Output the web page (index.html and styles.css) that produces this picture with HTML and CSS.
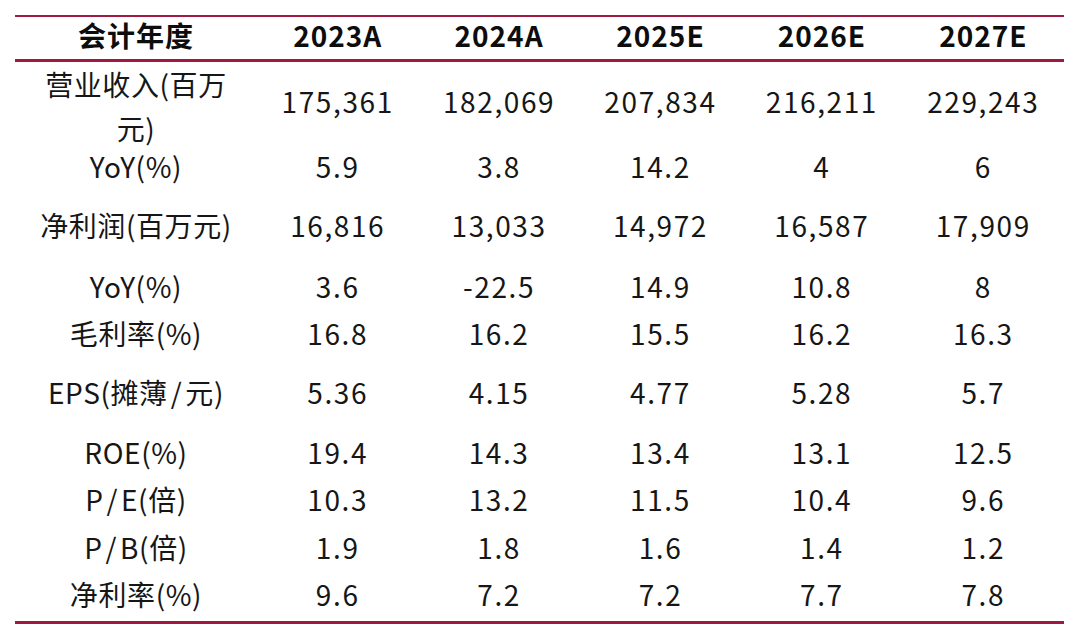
FILE: index.html
```html
<!DOCTYPE html>
<html lang="zh">
<head>
<meta charset="utf-8">
<title>盈利预测</title>
<link rel="stylesheet" href="styles.css">
</head>
<body>
<table class="fin">
  <colgroup>
    <col class="c-label">
    <col class="c-num"><col class="c-num"><col class="c-num"><col class="c-num"><col class="c-num">
  </colgroup>
  <thead>
    <tr>
      <th>会计年度</th><th>2023A</th><th>2024A</th><th>2025E</th><th>2026E</th><th>2027E</th>
    </tr>
  </thead>
  <tbody>
    <tr class="r1"><td class="lbl wrap">营业收入(百万元)</td><td>175,361</td><td>182,069</td><td>207,834</td><td>216,211</td><td>229,243</td></tr>
    <tr class="r2"><td class="lbl">YoY(%)</td><td>5.9</td><td>3.8</td><td>14.2</td><td>4</td><td>6</td></tr>
    <tr class="r3"><td class="lbl">净利润(百万元)</td><td>16,816</td><td>13,033</td><td>14,972</td><td>16,587</td><td>17,909</td></tr>
    <tr class="r4"><td class="lbl">YoY(%)</td><td>3.6</td><td>-22.5</td><td>14.9</td><td>10.8</td><td>8</td></tr>
    <tr class="r5"><td class="lbl">毛利率(%)</td><td>16.8</td><td>16.2</td><td>15.5</td><td>16.2</td><td>16.3</td></tr>
    <tr class="r6"><td class="lbl">EPS(摊薄<span class="sl">/</span>元)</td><td>5.36</td><td>4.15</td><td>4.77</td><td>5.28</td><td>5.7</td></tr>
    <tr class="r7"><td class="lbl">ROE(%)</td><td>19.4</td><td>14.3</td><td>13.4</td><td>13.1</td><td>12.5</td></tr>
    <tr class="r8"><td class="lbl">P<span class="sl">/</span>E(倍)</td><td>10.3</td><td>13.2</td><td>11.5</td><td>10.4</td><td>9.6</td></tr>
    <tr class="r9"><td class="lbl">P<span class="sl">/</span>B(倍)</td><td>1.9</td><td>1.8</td><td>1.6</td><td>1.4</td><td>1.2</td></tr>
    <tr class="r10"><td class="lbl">净利率(%)</td><td>9.6</td><td>7.2</td><td>7.2</td><td>7.7</td><td>7.8</td></tr>
  </tbody>
</table>
</body>
</html>
```
FILE: styles.css
```css
html, body {
  margin: 0;
  padding: 0;
  background: #ffffff;
}

body {
  font-family: "Noto Sans CJK SC", "Noto Sans", sans-serif;
  color: #161616;
}

.fin {
  margin: 15px 0 0 15px;
  width: 1049px;
  border-collapse: collapse;
  table-layout: fixed;
  border-top: 2px solid #a01a42;
  border-bottom: 3px solid #a0173f;
}

.c-label { width: 242px; }
.c-num { width: 161.4px; }

.fin th,
.fin td {
  padding: 0;
  text-align: center;
  vertical-align: middle;
  font-size: 28px;
  white-space: nowrap;
}

.fin thead tr {
  height: 42px;
  border-bottom: 3px solid #a0173f;
}

.fin th {
  font-weight: 700;
  color: #0d0d0d;
  line-height: 36px;
  padding-bottom: 6px;
  letter-spacing: 1px;
}

.fin td {
  font-weight: 400;
  line-height: 28px;
  padding-bottom: 12px;
  letter-spacing: 1.6px;
}

.fin td.lbl {
  padding: 0 18px 12px;
  letter-spacing: 0.6px;
}

.fin td.wrap {
  white-space: normal;
  line-height: 44px;
  padding-bottom: 2px;
}

.sl {
  padding: 0 3px;
}

.r1 { height: 86px; }
.r2 { height: 40px; }
.r3 { height: 78px; }
.r4 { height: 44px; }
.r5 { height: 50px; }
.r6 { height: 68px; }
.r7 { height: 52px; }
.r8 { height: 42px; }
.r9 { height: 54px; }
.r10 { height: 42px; }
```
